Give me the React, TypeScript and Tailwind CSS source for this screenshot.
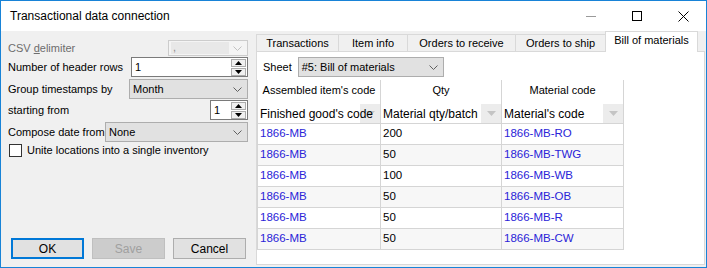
const Chevron = ({ color = "#606060" }: { color?: string }) => (
  <svg width="9" height="5" viewBox="0 0 9 5" className="shrink-0">
    <polyline points="0.5,0.5 4.5,4.5 8.5,0.5" fill="none" stroke={color} strokeWidth="1" />
  </svg>
);

const Select = ({ value, width }: { value: string; width: string }) => (
  <div className={`${width} h-[20px] border border-[#adadad] bg-[#e1e1e1] flex items-center justify-between pl-[3px] pr-[5px]`}>
    <span>{value}</span>
    <Chevron />
  </div>
);

const Spin = ({ value, width }: { value: string; width: string }) => (
  <div className={`${width} h-[20px] border border-[#7a7a7a] bg-white flex items-center justify-between pl-[3px] pr-[1px]`}>
    <span>{value}</span>
    <div className="flex flex-col gap-[1px]">
      <div className="w-[15px] h-[8px] border border-[#acacac] bg-[#f0f0f0] flex items-center justify-center">
        <svg width="7" height="4" viewBox="0 0 7 4">
          <polygon points="0,4 7,4 3.5,0" fill="#000" />
        </svg>
      </div>
      <div className="w-[15px] h-[8px] border border-[#acacac] bg-[#f0f0f0] flex items-center justify-center">
        <svg width="7" height="4" viewBox="0 0 7 4">
          <polygon points="0,0 7,0 3.5,4" fill="#000" />
        </svg>
      </div>
    </div>
  </div>
);

const rows = [
  ["1866-MB", "200", "1866-MB-RO"],
  ["1866-MB", "50", "1866-MB-TWG"],
  ["1866-MB", "100", "1866-MB-WB"],
  ["1866-MB", "50", "1866-MB-OB"],
  ["1866-MB", "50", "1866-MB-R"],
  ["1866-MB", "50", "1866-MB-CW"],
];

const cols = ["w-[123px]", "w-[121px]", "w-[122px]"];

const tabs = [
  { label: "Transactions", w: "w-[83px]" },
  { label: "Item info", w: "w-[70px]" },
  { label: "Orders to receive", w: "w-[109px]" },
  { label: "Orders to ship", w: "w-[91px]" },
];

const FilterCell = ({ label, w }: { label: string; w: string }) => (
  <div className={`${w} h-full relative border-r border-[#d5d5d5] flex items-center`}>
    <div className="absolute right-0 top-0 h-full w-[20px] bg-[#ececec] flex items-center justify-center">
      <svg width="9" height="5" viewBox="0 0 9 5">
        <polygon points="0,0 9,0 4.5,5" fill="#c4c4c4" />
      </svg>
    </div>
    <span className="relative pl-[2px] text-[12px] whitespace-nowrap">{label}</span>
  </div>
);

export default function App() {
  return (
    <div className="w-[707px] h-[268px] border border-[#1883d7] flex flex-col bg-[#f0f0f0] text-[11px] text-black font-['Liberation_Sans',Arial,sans-serif]">
      {/* title bar */}
      <div className="h-[30px] bg-white flex items-center shrink-0">
        <span className="pl-[9px] text-[12px] flex-1">Transactional data connection</span>
        <div className="w-[46px] h-full flex items-center justify-center">
          <div className="w-[10px] h-[1px] bg-[#9a9a9a]" />
        </div>
        <div className="w-[46px] h-full flex items-center justify-center">
          <div className="w-[10px] h-[10px] border border-black" />
        </div>
        <div className="w-[46px] h-full flex items-center justify-center">
          <svg width="11" height="11" viewBox="0 0 11 11">
            <path d="M0.5 0.5 L10.5 10.5 M10.5 0.5 L0.5 10.5" stroke="#000" strokeWidth="1" />
          </svg>
        </div>
      </div>

      <div className="flex-1 flex">
        {/* left settings */}
        <div className="w-[255px] flex flex-col pl-[7px] pr-[8px]">
          <div className="mt-[9px] h-[16px] flex items-center justify-between">
            <span className="text-[#6d6d6d]">
              CSV <span className="underline">d</span>elimiter
            </span>
            <div className="w-[80px] h-[16px] border border-[#cccccc] bg-[#f4f4f4] flex items-center justify-between pl-[2px] pr-[5px]">
              <div className="w-[58px] h-[12px] bg-[#e8e8e8] text-[#8a8a8a] leading-[10px] pl-[2px]">,</div>
              <Chevron color="#c2c2c2" />
            </div>
          </div>
          <div className="mt-[1px] h-[20px] flex items-center justify-between">
            <span>Number of header rows</span>
            <Spin value="1" width="w-[117px]" />
          </div>
          <div className="mt-[2px] h-[20px] flex items-center justify-between">
            <span>Group timestamps by</span>
            <Select value="Month" width="w-[119px]" />
          </div>
          <div className="mt-[1px] h-[20px] flex items-center justify-between">
            <span>starting from</span>
            <Spin value="1" width="w-[38px]" />
          </div>
          <div className="mt-[2px] h-[20px] flex items-center justify-between">
            <span>Compose date from</span>
            <Select value="None" width="w-[143px]" />
          </div>
          <div className="mt-[2px] h-[13px] flex items-center gap-[5px] pl-[1px]">
            <div className="w-[13px] h-[13px] border border-[#333333] bg-white" />
            <span>Unite locations into a single inventory</span>
          </div>

          <div className="mt-auto mb-[8px] ml-[3px] flex gap-[8px] text-[12px]">
            <button className="w-[73px] h-[21px] border-2 border-[#0078d7] bg-[#e1e1e1]">OK</button>
            <button className="w-[73px] h-[21px] border border-[#bfbfbf] bg-[#cccccc] text-[#a0a0a0]">Save</button>
            <button className="w-[73px] h-[21px] border border-[#adadad] bg-[#e1e1e1]">Cancel</button>
          </div>
        </div>

        {/* tab control */}
        <div className="w-[450px] flex flex-col pr-[1px] pb-[2px]">
          <div className="h-[20px] flex items-end shrink-0">
            {tabs.map((t, i) => (
              <div
                key={t.label}
                className={`${t.w} h-[17px] border border-b-0 border-[#d9d9d9] flex items-center justify-center ${i > 0 ? "-ml-[1px]" : ""}`}
              >
                {t.label}
              </div>
            ))}
            <div className="w-[93px] h-[21px] -ml-[1px] -mb-[1px] border border-b-0 border-[#d9d9d9] bg-white relative z-10 flex items-center justify-center pb-[3px]">
              Bill of materials
            </div>
          </div>

          <div className="flex-1 border border-[#d9d9d9] bg-white flex flex-col">
            <div className="mt-[5px] pl-[6px] h-[20px] flex items-center gap-[6px]">
              <span>Sheet</span>
              <Select value="#5: Bill of materials" width="w-[146px]" />
            </div>

            <div className="mt-[3px] w-[367px] border-l border-[#d5d5d5] flex flex-col">
              <div className="h-[24px] flex">
                {["Assembled item's code", "Qty", "Material code"].map((h, i) => (
                  <div key={h} className={`${cols[i]} h-full border-r border-[#d5d5d5] flex items-center justify-center pb-[4px]`}>
                    {h}
                  </div>
                ))}
              </div>
              <div className="h-[20px] flex border-b border-[#d5d5d5]">
                <FilterCell label="Finished good's code" w={cols[0]} />
                <FilterCell label="Material qty/batch" w={cols[1]} />
                <FilterCell label="Material's code" w={cols[2]} />
              </div>
              {rows.map((r, ri) => (
                <div key={ri} className={`h-[21px] flex border-b border-[#d5d5d5] text-[11.5px] ${ri % 2 ? "bg-[#f7f7f7]" : "bg-white"}`}>
                  {r.map((c, ci) => (
                    <div
                      key={ci}
                      className={`${cols[ci]} h-full border-r border-[#d5d5d5] flex items-center pl-[2px] ${ci === 1 ? "text-black" : "text-[#2a24d8]"}`}
                    >
                      {c}
                    </div>
                  ))}
                </div>
              ))}
            </div>
          </div>
        </div>
      </div>
    </div>
  );
}
